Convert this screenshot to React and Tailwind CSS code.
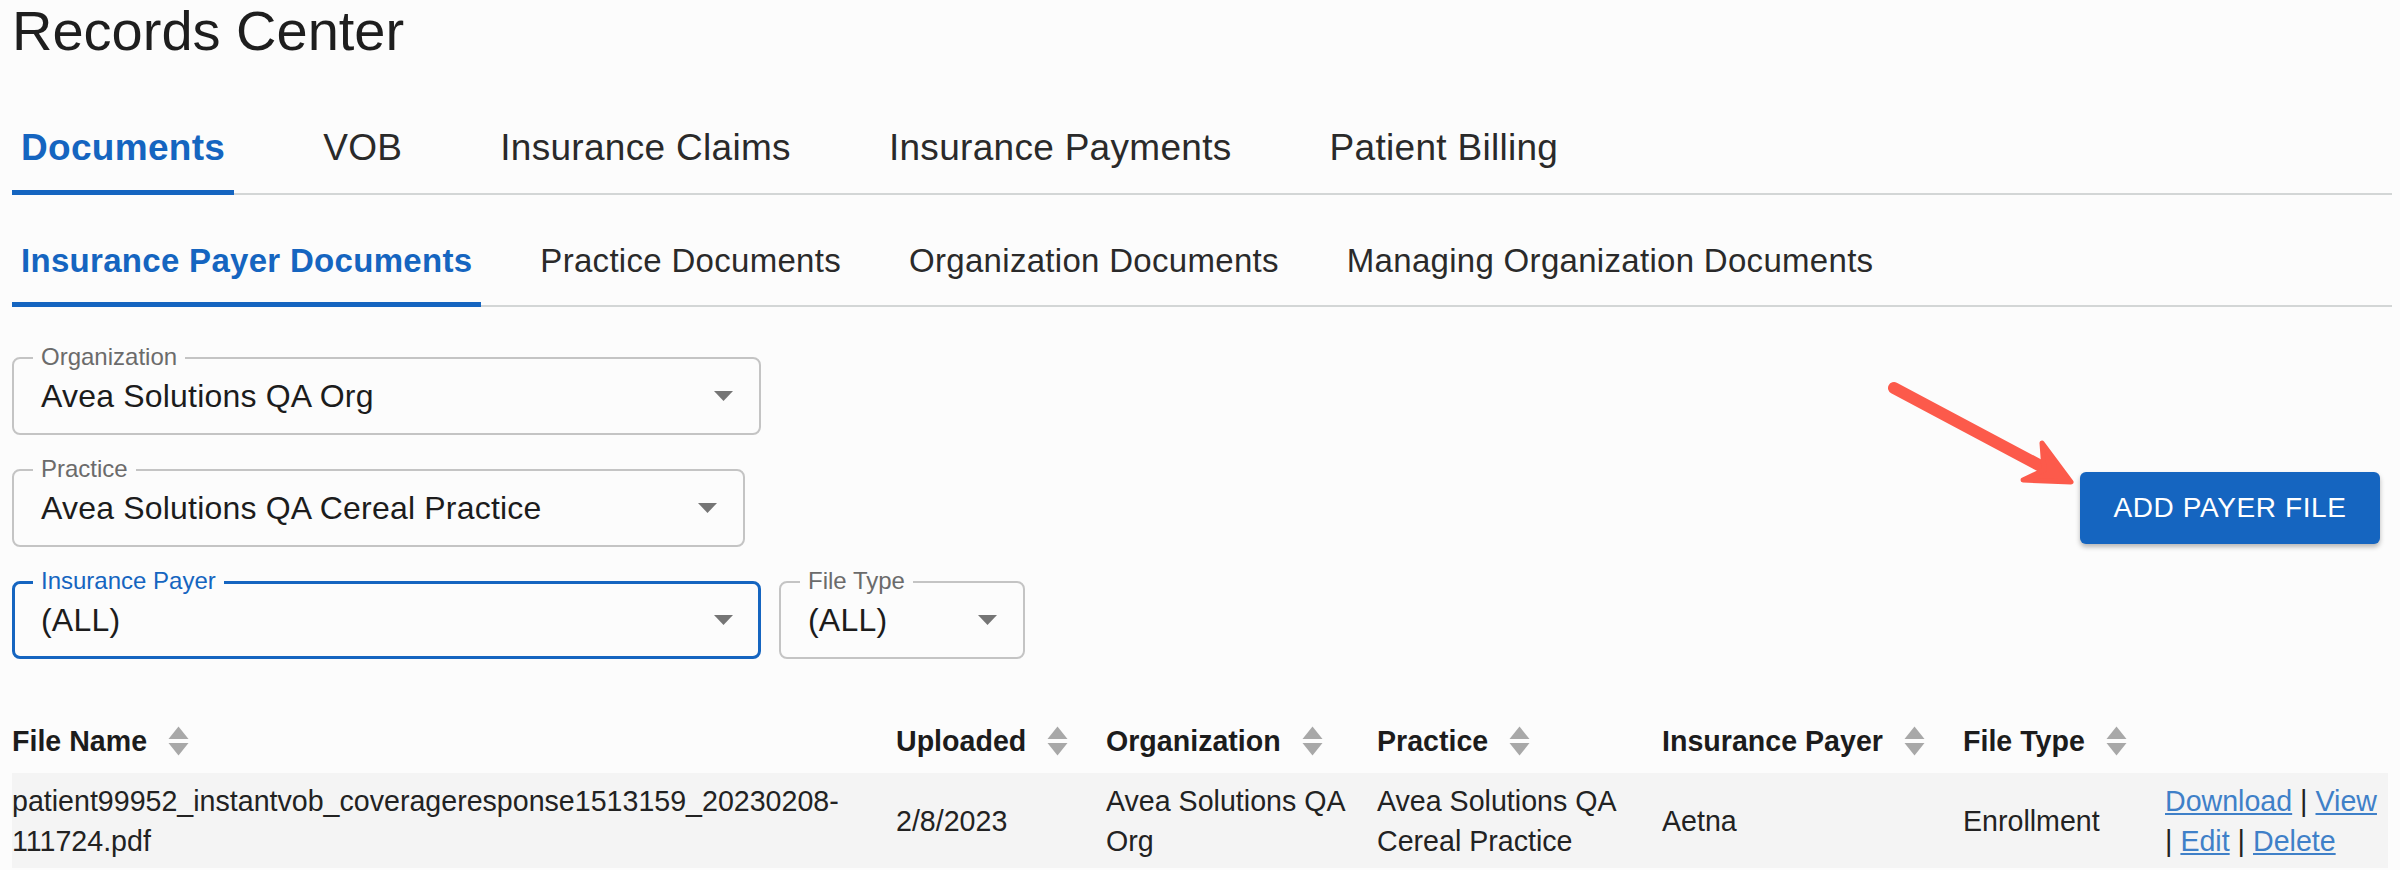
import React from 'react'

const TOP_TABS = ['Documents', 'VOB', 'Insurance Claims', 'Insurance Payments', 'Patient Billing']
const SUB_TABS = ['Insurance Payer Documents', 'Practice Documents', 'Organization Documents', 'Managing Organization Documents']

const COLUMNS = [
  { label: 'File Name', width: 'w-[884px]' },
  { label: 'Uploaded', width: 'w-[210px]' },
  { label: 'Organization', width: 'w-[271px]' },
  { label: 'Practice', width: 'w-[285px]' },
  { label: 'Insurance Payer', width: 'w-[301px]' },
  { label: 'File Type', width: 'w-[202px]' },
  { label: null, width: 'w-[223px]' },
]

function Caret({ className = '' }) {
  return (
    <svg width="19" height="10" viewBox="0 0 19 10" className={className}>
      <path d="M0 0H19L9.5 10Z" fill="#757575" />
    </svg>
  )
}

function SortIcon() {
  return (
    <svg width="21" height="30" viewBox="0 0 21 30" className="shrink-0">
      <path d="M10.5 0.5L20.5 13H0.5Z" fill="#a8a8a8" strokeLinejoin="round" />
      <path d="M0.5 17H20.5L10.5 29.5Z" fill="#a8a8a8" strokeLinejoin="round" />
    </svg>
  )
}

function Field({ label, value, width, focused }) {
  return (
    <div
      className={`relative rounded-[8px] ${width} ${
        focused ? 'border-[3px] border-[#1565c0]' : 'border-2 border-[#c4c4c4]'
      }`}
    >
      <span
        className={`absolute px-[8px] bg-[#fcfcfc] text-[24px] leading-[24px] ${
          focused ? '-top-[15px] left-[18px] text-[#1565c0]' : '-top-[14px] left-[19px] text-[#6b6b6b]'
        }`}
      >
        {label}
      </span>
      <div
        className={`flex items-center justify-between ${
          focused ? 'pl-[26px] pr-[25px] pt-[17px] pb-[17px]' : 'pl-[27px] pr-[26px] pt-[18px] pb-[18px]'
        }`}
      >
        <span className="text-[32px] leading-[38px] tracking-[0.2px] text-[#1c1c1c] whitespace-nowrap">{value}</span>
        <Caret />
      </div>
    </div>
  )
}

export default function App() {
  return (
    <div className="relative min-h-[870px] w-[2400px] overflow-hidden bg-[#fcfcfc] pl-[12px] pr-[8px] font-['Liberation_Sans',Arial,sans-serif] text-[#222]">
      {/* Title */}
      <h1 className="text-[56px] leading-[62px] font-normal text-[#1e1e1e]">Records Center</h1>

      {/* Top tabs */}
      <div className="mt-[39px] flex gap-[80px] border-b-2 border-[#d3d6d6]">
        {TOP_TABS.map((t, i) => (
          <div
            key={t}
            className={`-mb-[2px] border-b-[5px] px-[9px] pt-[25px] pb-[20px] text-[37px] leading-[44px] tracking-[0.3px] whitespace-nowrap ${
              i === 0 ? 'border-[#1565c0] font-bold text-[#1565c0]' : 'border-transparent text-[#2a2a2a]'
            }`}
          >
            {t}
          </div>
        ))}
      </div>

      {/* Sub tabs */}
      <div className="mt-[21px] flex gap-[50px] border-b-2 border-[#d3d6d6]">
        {SUB_TABS.map((t, i) => (
          <div
            key={t}
            className={`-mb-[2px] border-b-[5px] px-[9px] pt-[25px] pb-[21px] text-[33px] leading-[40px] tracking-[0.3px] whitespace-nowrap ${
              i === 0 ? 'border-[#1565c0] font-bold text-[#1565c0]' : 'border-transparent text-[#2a2a2a]'
            }`}
          >
            {t}
          </div>
        ))}
      </div>

      {/* Filters + action */}
      <div className="mt-[50px] flex items-center justify-between">
        <div className="flex flex-col gap-[34px]">
          <Field label="Organization" value="Avea Solutions QA Org" width="w-[749px]" />
          <Field label="Practice" value="Avea Solutions QA Cereal Practice" width="w-[733px]" />
          <div className="flex gap-[18px]">
            <Field label="Insurance Payer" value="(ALL)" width="w-[749px]" focused />
            <Field label="File Type" value="(ALL)" width="w-[246px]" />
          </div>
        </div>
        <button className="mr-[12px] h-[72px] w-[300px] rounded-[6px] bg-[#1565c0] text-[28px] tracking-[0.6px] text-white shadow-[0_3px_5px_rgba(0,0,0,0.28)]">
          ADD PAYER FILE
        </button>
      </div>

      {/* Table */}
      <table className="mt-[50px] w-[2376px] table-fixed border-collapse text-[28.6px] leading-[40px]">
        <colgroup>
          {COLUMNS.map((c, i) => (
            <col key={i} className={c.width} />
          ))}
        </colgroup>
        <thead>
          <tr>
            {COLUMNS.map((c, i) => (
              <th key={i} className="py-[12px] text-left font-bold text-[#1c1c1c]">
                {c.label && (
                  <span className="inline-flex items-center gap-[21px] whitespace-nowrap">
                    {c.label}
                    <SortIcon />
                  </span>
                )}
              </th>
            ))}
          </tr>
        </thead>
        <tbody>
          <tr className="bg-[#f4f4f4] text-[#222] align-middle">
            <td className="py-[7.5px] pr-[16px]">patient99952_instantvob_coverageresponse1513159_20230208-111724.pdf</td>
            <td className="py-[7.5px] pr-[16px]">2/8/2023</td>
            <td className="py-[7.5px] pr-[16px]">Avea Solutions QA Org</td>
            <td className="py-[7.5px] pr-[16px]">Avea Solutions QA Cereal Practice</td>
            <td className="py-[7.5px] pr-[16px]">Aetna</td>
            <td className="py-[7.5px] pr-[16px]">Enrollment</td>
            <td className="py-[7.5px]">
              <a className="text-[#3f80c8] underline">Download</a> |{'\u00a0'}
              <a className="text-[#3f80c8] underline">View</a> |{'\u00a0'}
              <a className="text-[#3f80c8] underline">Edit</a> |{'\u00a0'}
              <a className="text-[#3f80c8] underline">Delete</a>
            </td>
          </tr>
        </tbody>
      </table>

      {/* Annotation arrow */}
      <svg
        className="pointer-events-none absolute left-0 top-0"
        width="2400"
        height="870"
        viewBox="0 0 2400 870"
      >
        <line x1="1894" y1="388" x2="2052" y2="472" stroke="#fc5a4b" strokeWidth="12" strokeLinecap="round" />
        <path
          d="M2042 443L2071 482L2023 480L2044 470Z"
          fill="#fc5a4b"
          stroke="#fc5a4b"
          strokeWidth="5"
          strokeLinejoin="round"
        />
      </svg>
    </div>
  )
}
